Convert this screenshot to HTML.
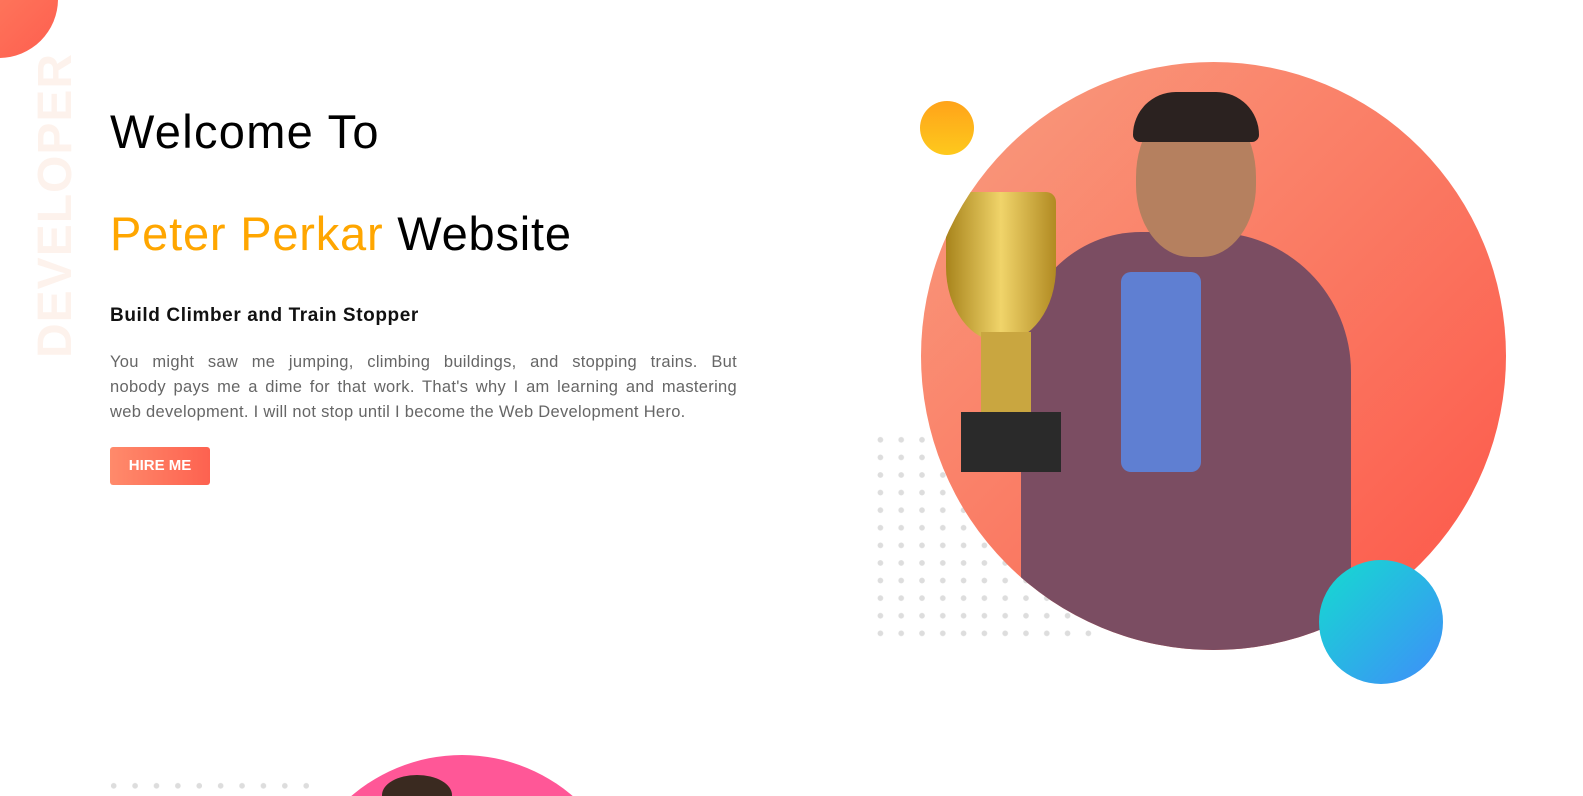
<!DOCTYPE html>
<html><head><meta charset="utf-8"><style>
*{margin:0;padding:0;box-sizing:border-box}
html,body{width:1583px;height:796px;overflow:hidden}
body{background:#fff;font-family:"Liberation Sans",sans-serif;position:relative}
.abs{position:absolute}
h1{position:absolute;left:110px;font-weight:400;font-size:47px;color:#000;letter-spacing:.8px}
.dots{position:absolute;background-image:radial-gradient(circle,#ddd 2.6px,transparent 3px)}
.pl{text-align:justify;text-align-last:justify;white-space:nowrap}
</style></head><body>
<div class="abs" style="left:0;top:0;width:1583px;height:796px;overflow:hidden">
<div class="abs" style="left:-60px;top:-60px;width:118px;height:118px;border-radius:50%;background:linear-gradient(135deg,#ff8a65,#fd5e4f)"></div>
<div class="abs" style="left:28px;top:358px;transform:rotate(-90deg);transform-origin:0 0;font-weight:700;font-size:48px;color:#fdf2ec;letter-spacing:1px;white-space:nowrap">DEVELOPER</div>
<h1 style="top:104px;letter-spacing:1.3px">Welcome To</h1>
<h1 style="top:206px"><span style="color:#ffa600">Peter Perkar</span> Website</h1>
<div class="abs" style="left:110px;top:305px;font-size:19px;font-weight:700;color:#111;letter-spacing:.6px">Build Climber and Train Stopper</div>
<div class="abs" style="left:110px;top:350px;width:627px;font-size:16.5px;letter-spacing:.3px;line-height:25px;color:#666">
<div class="pl">You might saw me jumping, climbing buildings, and stopping trains. But</div>
<div class="pl">nobody pays me a dime for that work. That's why I am learning and mastering</div>
<div>web development. I will not stop until I become the Web Development Hero.</div>
</div>
<div class="abs" style="left:110px;top:447px;width:100px;height:38px;border-radius:3px;background:linear-gradient(90deg,#ff8a6b,#fd6250);color:#fff;font-weight:700;font-size:15px;line-height:38px;text-align:center">HIRE ME</div>
<div class="dots" style="left:870px;top:431px;width:230px;height:212px;background-size:20.8px 17.6px"></div>
<div class="abs" style="left:921px;top:62px;width:585px;height:588px;border-radius:50%;background:linear-gradient(135deg,#f9967a 10%,#fa7a63 50%,#fd5c4d 90%);overflow:hidden">
 <div class="abs" style="left:100px;top:170px;width:330px;height:460px;border-radius:120px 140px 0 0;background:#7b4d62"></div>
 <div class="abs" style="left:200px;top:210px;width:80px;height:200px;background:#5f7fd2;border-radius:10px"></div>
 <div class="abs" style="left:215px;top:35px;width:120px;height:160px;border-radius:50% 50% 45% 45%;background:#b5805f"></div>
 <div class="abs" style="left:212px;top:30px;width:126px;height:50px;border-radius:60px 60px 10px 10px;background:#2b2220"></div>
 <div class="abs" style="left:25px;top:130px;width:110px;height:150px;border-radius:10px 10px 50% 50%;background:linear-gradient(90deg,#a8841c,#f0d46a,#b18a22)"></div>
 <div class="abs" style="left:60px;top:270px;width:50px;height:80px;background:#c9a640"></div>
 <div class="abs" style="left:40px;top:350px;width:100px;height:60px;background:#2a2a2a"></div>
</div>
<div class="abs" style="left:920px;top:101px;width:54px;height:54px;border-radius:50%;background:linear-gradient(180deg,#ffa31a,#fec91c)"></div>
<div class="abs" style="left:1319px;top:560px;width:124px;height:124px;border-radius:50%;background:linear-gradient(135deg,#14dccf,#3f8dfa)"></div>
<div class="dots" style="left:103px;top:777px;width:220px;height:19px;background-size:21.4px 17.6px"></div>
<div class="abs" style="left:292px;top:755px;width:340px;height:41px;overflow:hidden">
 <div class="abs" style="left:0;top:0;width:340px;height:340px;border-radius:50%;background:#ff5797"></div>
 <div class="abs" style="left:90px;top:20px;width:70px;height:40px;border-radius:50%;background:#3a2a20"></div>
</div>
</div>
</body></html>
